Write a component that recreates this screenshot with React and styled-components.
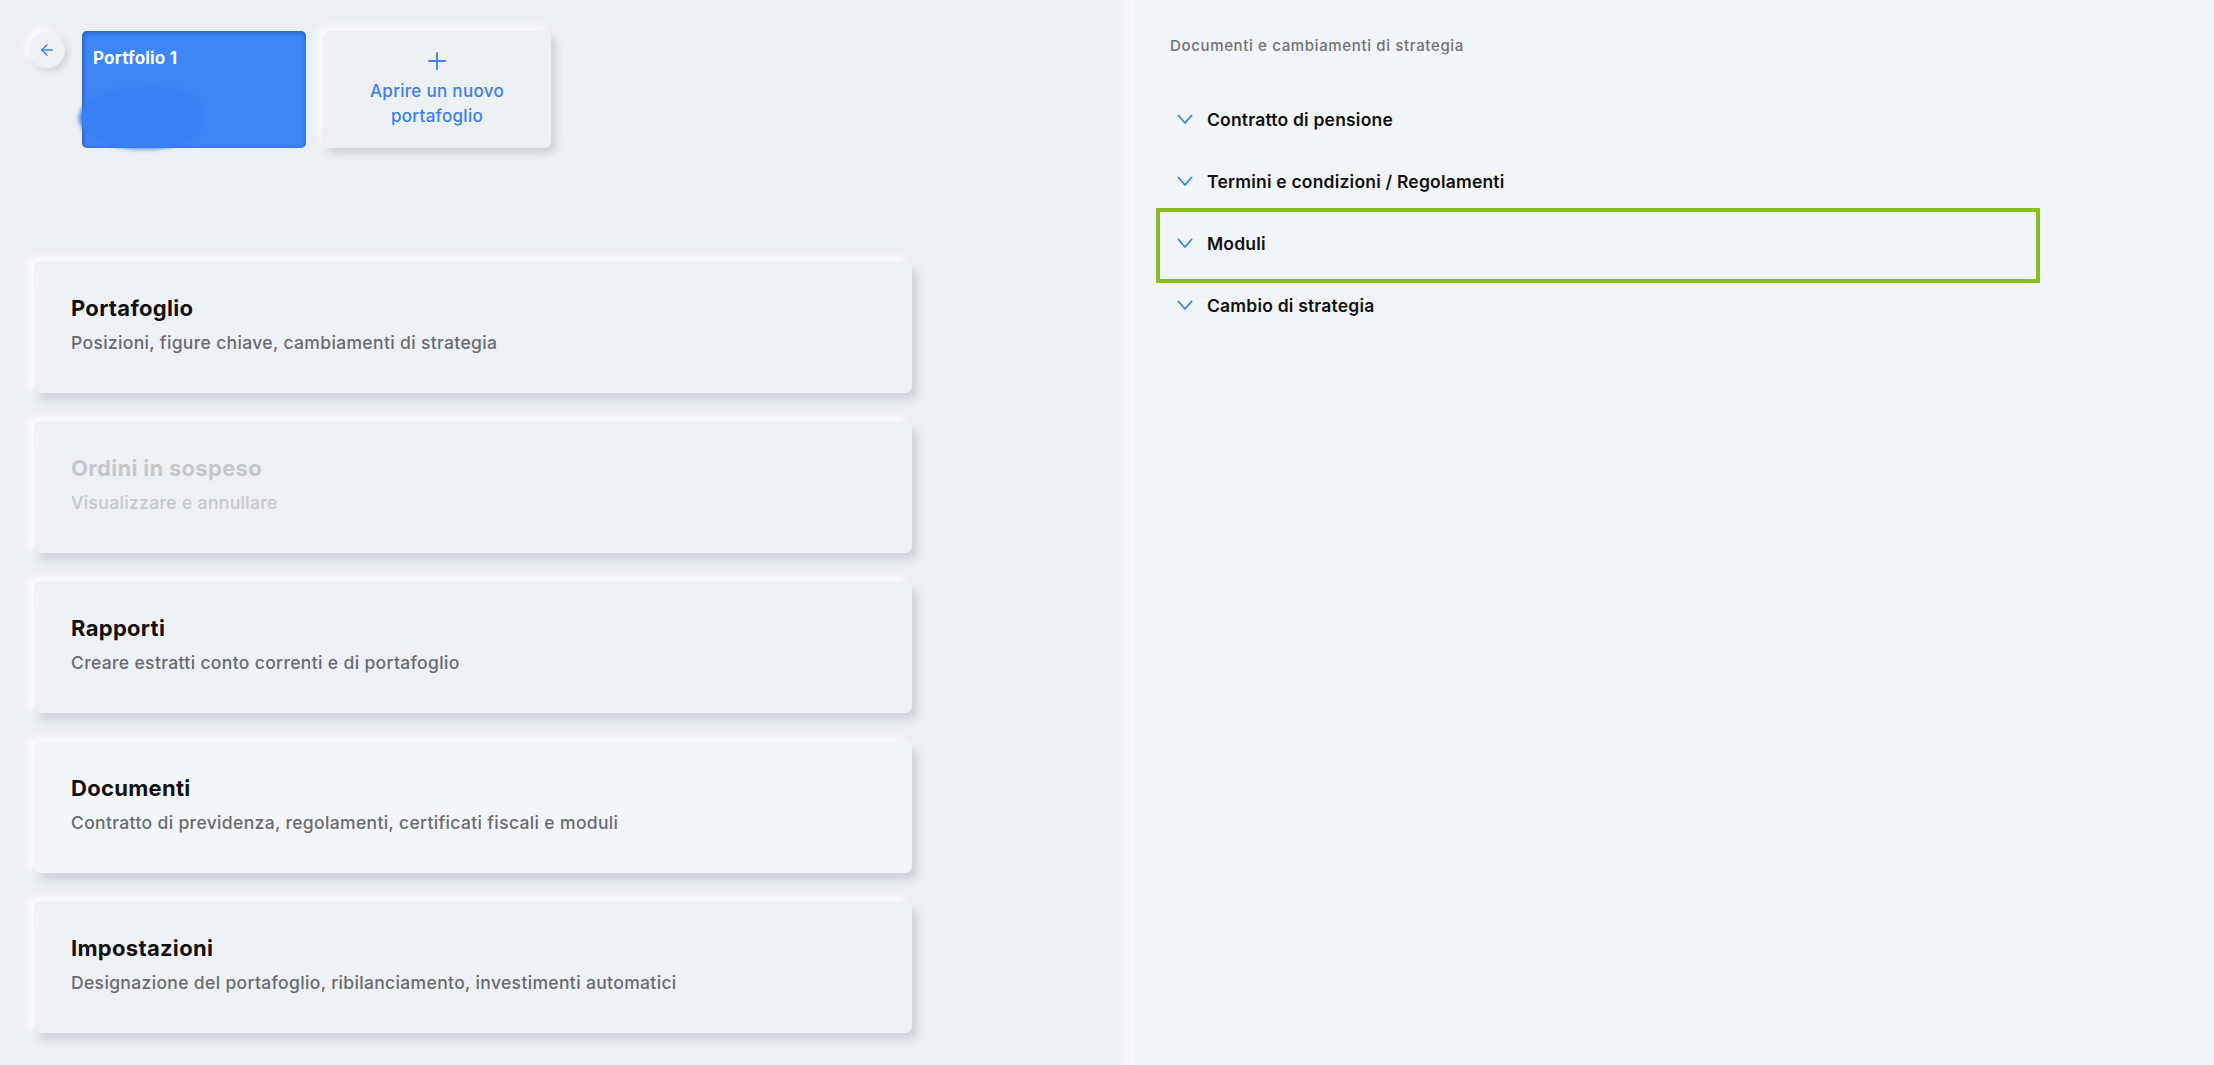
import React from 'react'
import styled, { createGlobalStyle } from 'styled-components'

const GlobalStyle = createGlobalStyle`
  html, body {
    margin: 0;
    padding: 0;
    background: #edf0f3;
    font-family: Inter, Roboto, "Noto Sans", Arial, sans-serif;
  }
  * { box-sizing: border-box; }
`

const cards = [
  { title: 'Portafoglio', text: 'Posizioni, figure chiave, cambiamenti di strategia' },
  { title: 'Ordini in sospeso', text: 'Visualizzare e annullare', disabled: true },
  { title: 'Rapporti', text: 'Creare estratti conto correnti e di portafoglio' },
  { title: 'Documenti', text: 'Contratto di previdenza, regolamenti, certificati fiscali e moduli', active: true },
  { title: 'Impostazioni', text: 'Designazione del portafoglio, ribilanciamento, investimenti automatici' },
]

const docs = [
  { label: 'Contratto di pensione' },
  { label: 'Termini e condizioni / Regolamenti' },
  { label: 'Moduli', marked: true },
  { label: 'Cambio di strategia' },
]

function Chevron() {
  return (
    <svg width="16" height="11" viewBox="0 0 16 11" fill="none">
      <polyline points="1.5,1.5 8,9 14.5,1.5" stroke="#3b82f0" strokeWidth="1.9" strokeLinecap="round" strokeLinejoin="round" />
    </svg>
  )
}

function App() {
  return (
    <>
      <GlobalStyle />
      <Page>
        <Left>
          <TopRow>
            <BackButton>
              <svg width="18" height="18" viewBox="0 0 24 24" fill="none" stroke="#3b82f0" strokeWidth="1.8" strokeLinecap="round" strokeLinejoin="round">
                <path d="M19 12H5" />
                <path d="M12 19l-7-7 7-7" />
              </svg>
            </BackButton>
            <PortfolioCard>
              <PortfolioTitle>Portfolio 1</PortfolioTitle>
              <Blob />
            </PortfolioCard>
            <NewCard>
              <svg width="20" height="20" viewBox="0 0 20 20" fill="none" stroke="#3b82f0" strokeWidth="1.8" strokeLinecap="round">
                <path d="M10 2v16" />
                <path d="M2 10h16" />
              </svg>
              <NewText>Aprire un nuovo<br />portafoglio</NewText>
            </NewCard>
          </TopRow>

          <CardList>
            {cards.map((c) => (
              <MenuCard key={c.title} $active={c.active}>
                <CardTitle $disabled={c.disabled}>{c.title}</CardTitle>
                <CardText $disabled={c.disabled}>{c.text}</CardText>
              </MenuCard>
            ))}
          </CardList>
        </Left>

        <Right>
          <Heading>Documenti e cambiamenti di strategia</Heading>
          <DocList>
            {docs.map((d) => (
              <DocRow key={d.label} $marked={d.marked}>
                <Chevron />
                <DocLabel>{d.label}</DocLabel>
              </DocRow>
            ))}
          </DocList>
        </Right>
      </Page>
    </>
  )
}

export default App

const Page = styled.div`
display: grid;
grid-template-columns: 1134px 1fr;
min-height: 1065px;
`

const Left = styled.div`
background: #edf0f3;
padding: 31px 0 0 29px;
position: relative;

&::after {
    content: '';
    position: absolute;
    top: 0;
    right: 0;
    bottom: 0;
    width: 18px;
    background: linear-gradient(to right, #edf0f3, #f7f8fa);
}
`

const TopRow = styled.div`
display: flex;
align-items: flex-start;
`

const BackButton = styled.button`
width: 36px;
height: 36px;
border-radius: 50%;
border: none;
background: #eef1f4;
display: flex;
align-items: center;
justify-content: center;
padding: 0;
margin-top: 1px;
box-shadow: 3px 3px 7px rgba(170, 178, 190, 0.45), -3px -3px 7px rgba(255, 255, 255, 0.9);
`

const PortfolioCard = styled.div`
position: relative;
margin-left: 17px;
width: 224px;
height: 117px;
border-radius: 5px;
background: #3d86f6;
padding: 17px 11px;
box-shadow: inset 0 2px 4px rgba(20, 60, 150, 0.45), inset 2px 0 4px rgba(20, 60, 150, 0.25);
`

const PortfolioTitle = styled.div`
color: #fff;
font-weight: 700;
font-size: 17px;
letter-spacing: 0.2px;
`

const Blob = styled.div`
position: absolute;
left: -3px;
top: 56px;
width: 125px;
height: 62px;
border-radius: 50% 40% 45% 50%;
background: #3a82f3;
filter: blur(2px);
`

const NewCard = styled.div`
margin-left: 17px;
width: 228px;
height: 117px;
border-radius: 6px;
background: #edf0f3;
display: flex;
flex-direction: column;
align-items: center;
padding-top: 20px;
box-shadow: 4px 5px 9px rgba(170, 178, 190, 0.5), -4px -4px 9px rgba(255, 255, 255, 0.9);
`

const NewText = styled.div`
margin-top: 8px;
text-align: center;
color: #3b7fee;
font-weight: 500;
font-size: 17px;
line-height: 25px;
letter-spacing: 0.3px;
`

const CardList = styled.div`
margin-top: 113px;
margin-left: 5px;
width: 878px;
display: flex;
flex-direction: column;
gap: 28px;
`

const MenuCard = styled.div`
height: 132px;
border-radius: 7px;
background: ${(p) => (p.$active ? '#f3f6f9' : '#eef1f4')};
padding: 34px 37px 0 37px;
box-shadow: 5px 7px 10px rgba(165, 172, 185, 0.45), -5px -3px 8px rgba(255, 255, 255, 0.95);
`

const CardTitle = styled.div`
font-size: 22px;
font-weight: 700;
letter-spacing: 0.3px;
color: ${(p) => (p.$disabled ? '#c5c7ca' : '#111')};
`

const CardText = styled.div`
margin-top: 11px;
font-size: 17.5px;
font-weight: 500;
letter-spacing: 0.35px;
color: ${(p) => (p.$disabled ? '#c7c9cc' : '#686b70')};
`

const Right = styled.div`
background: #f2f5f8;
padding: 36px 0 0 22px;
`

const Heading = styled.div`
margin-left: 14px;
font-size: 15px;
font-weight: 500;
letter-spacing: 0.65px;
color: #6f7276;
`

const DocList = styled.div`
margin-top: 32px;
width: 884px;
display: flex;
flex-direction: column;
`

const DocRow = styled.div`
position: relative;
height: 62px;
margin: 0 6px;
display: flex;
align-items: flex-start;
padding: 22px 0 0 15px;
gap: 14px;

&::after {
    content: '';
    display: ${(p) => (p.$marked ? 'block' : 'none')};
    position: absolute;
    top: -3px;
    bottom: -10px;
    left: -6px;
    right: -6px;
    border: 4px solid #8abd22;
    pointer-events: none;
}

svg {
    margin-top: 5px;
    flex-shrink: 0;
}
`

const DocLabel = styled.div`
font-size: 17.5px;
font-weight: 600;
letter-spacing: 0.2px;
color: #111;
`
